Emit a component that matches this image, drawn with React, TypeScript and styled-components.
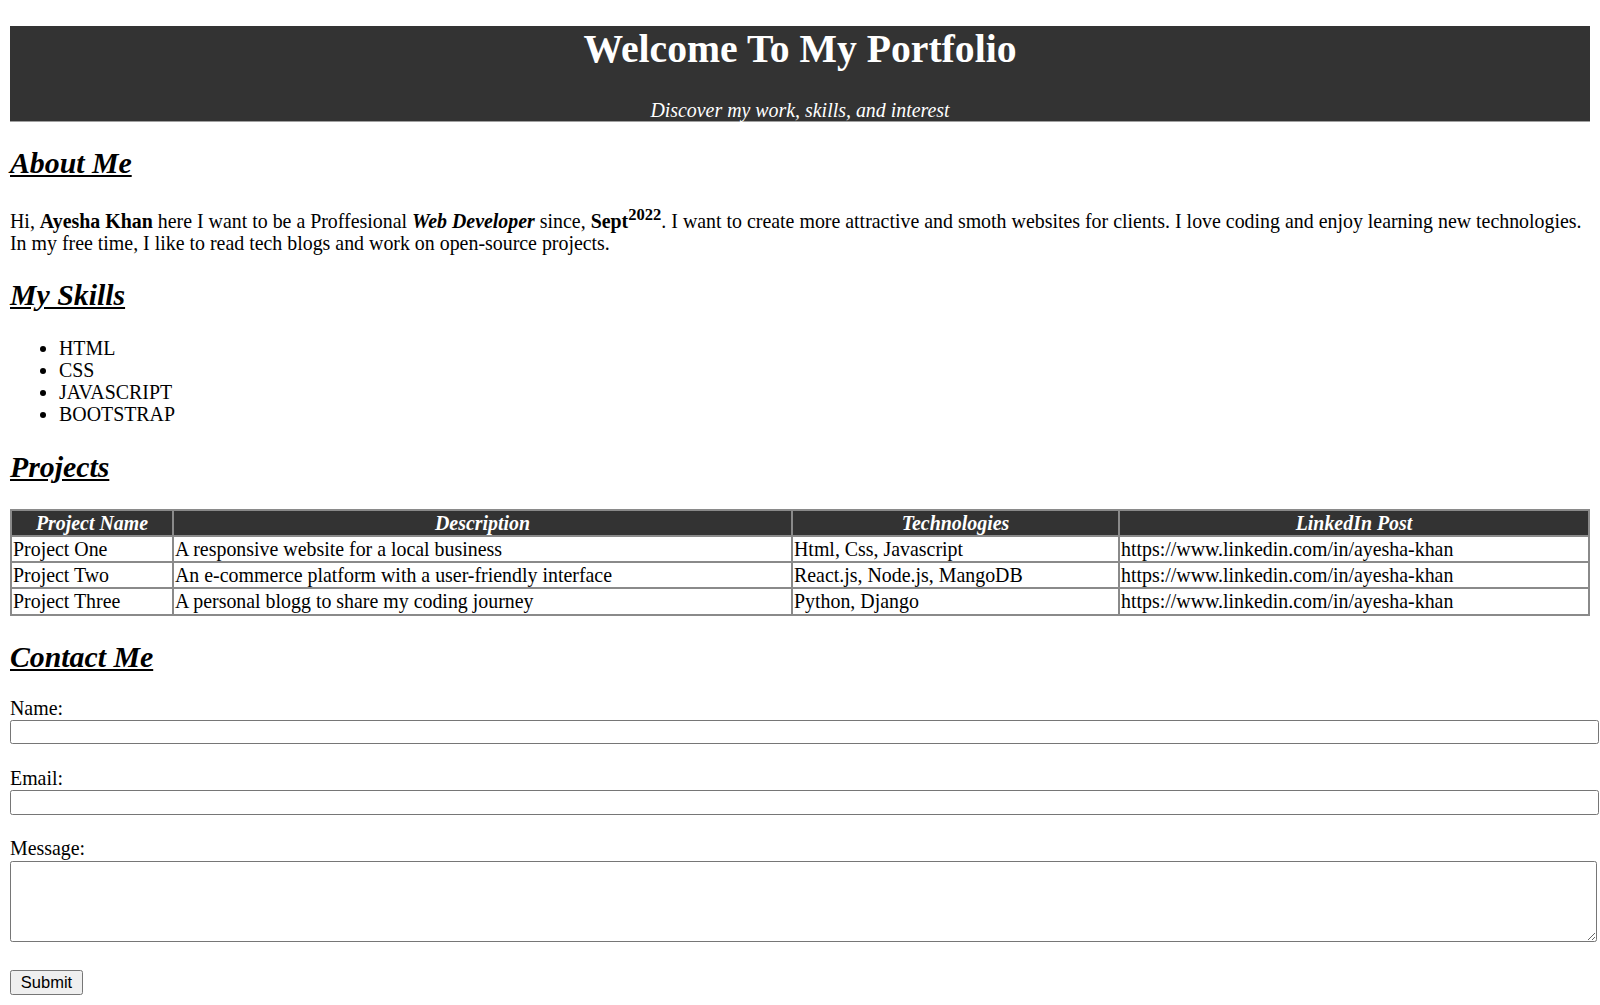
import React from 'react';
import styled, { createGlobalStyle } from 'styled-components';

const GlobalStyle = createGlobalStyle`
  html, body {
    margin: 0;
    padding: 0;
    background: #ffffff;
  }
  body {
    font-family: "Liberation Serif", "Times New Roman", serif;
    font-size: 19.9px;
    line-height: 22.1px;
    color: #000000;
  }
`

const Page = styled.div`
  padding: 0 10px 12px;
  overflow: hidden;
`

/* header band */
const Banner = styled.header`
  margin-top: 26px;
  background: #333333;
  color: #ffffff;
  text-align: center;
  border-bottom: 1px solid #a0a0a0;
`

const BannerTitle = styled.h1`
  margin: 0 0 28px;
  padding-top: 1px;
  font-size: 39.7px;
  line-height: 44px;
  font-weight: bold;
`

const BannerSub = styled.p`
  margin: 0;
  font-size: 19.9px;
  line-height: 22px;
  font-style: italic;
`

const Section = styled.section``

const Title = styled.h2`
  margin: 24px 0;
  font-size: 29.8px;
  line-height: 33px;
  font-weight: bold;
  font-style: italic;
  text-decoration: underline;
`

const Text = styled.p`
  margin: 25px 0 19.2px;
`

const SkillList = styled.ul`
  margin: 26px 0 25px;
  padding-left: 49px;
`

const Skill = styled.li`
  line-height: 22.1px;
`

/* projects table */
const Table = styled.table`
  width: 100%;
  margin-top: 26px;
  border-collapse: collapse;
  table-layout: fixed;
  font-size: 19.9px;
`

const HeadCell = styled.th<{ $w?: number }>`
  width: ${p => (p.$w ? `${p.$w}px` : 'auto')};
  background: #333333;
  color: #ffffff;
  font-style: italic;
  font-weight: bold;
  text-align: center;
  padding: 1px 2px;
  line-height: 22.1px;
  border: 2px solid #8a8a8a;
`

const Cell = styled.td`
  padding: 1px 1px;
  line-height: 22.1px;
  border: 2px solid #8a8a8a;
  text-align: left;
  white-space: nowrap;
  overflow: hidden;
`

/* contact form */
const Form = styled.form`
  margin: 0;
`

const Label = styled.label`
  display: block;
  line-height: 22.1px;
`

const Field = styled.input`
  display: block;
  width: 100%;
  height: 20.5px;
  margin: 1.2px 0 22.6px;
  padding: 1px 3.5px;
  border: 1px solid #767676;
  border-radius: 2.4px;
  font-family: "Liberation Sans", Arial, sans-serif;
  font-size: 16px;
  box-sizing: content-box;
  background: #ffffff;
`

const MessageBox = styled.textarea`
  display: block;
  width: 100%;
  height: 74px;
  margin: 1.2px 0 28.6px;
  padding: 2.5px;
  border: 1px solid #767676;
  border-radius: 2.4px;
  font-family: "Liberation Mono", monospace;
  font-size: 16px;
  box-sizing: content-box;
`

const SubmitButton = styled.button`
  display: block;
  height: 24.5px;
  padding: 0 9.8px;
  border: 1px solid #767676;
  border-radius: 2.4px;
  background: #efefef;
  color: #000000;
  font-family: "Liberation Sans", Arial, sans-serif;
  font-size: 16.5px;
  line-height: 18px;
`

const projects = [
  { name: 'Project One', desc: 'A responsive website for a local business', tech: 'Html, Css, Javascript' },
  { name: 'Project Two', desc: 'An e-commerce platform with a user-friendly interface', tech: 'React.js, Node.js, MangoDB' },
  { name: 'Project Three', desc: 'A personal blogg to share my coding journey', tech: 'Python, Django' },
]

const skills = ['HTML', 'CSS', 'JAVASCRIPT', 'BOOTSTRAP']

export default function App() {
  return (
    <>
      <GlobalStyle />
      <Page>
        <Banner>
          <BannerTitle>Welcome To My Portfolio</BannerTitle>
          <BannerSub>Discover my work, skills, and interest</BannerSub>
        </Banner>

        <Section>
          <Title>About Me</Title>
          <Text>
            Hi, <b>Ayesha Khan</b> here I want to be a Proffesional <b><i>Web Developer</i></b> since,{' '}
            <b>Sept<sup>2022</sup></b>. I want to create more attractive and smoth websites for clients. I love
            coding and enjoy learning new technologies. In my free time, I like to read tech blogs and work on
            open-source projects.
          </Text>
        </Section>

        <Section>
          <Title>My Skills</Title>
          <SkillList>
            {skills.map(s => (
              <Skill key={s}>{s}</Skill>
            ))}
          </SkillList>
        </Section>

        <Section>
          <Title>Projects</Title>
          <Table>
            <thead>
              <tr>
                <HeadCell $w={156}>Project Name</HeadCell>
                <HeadCell $w={613}>Description</HeadCell>
                <HeadCell $w={321}>Technologies</HeadCell>
                <HeadCell>LinkedIn Post</HeadCell>
              </tr>
            </thead>
            <tbody>
              {projects.map(p => (
                <tr key={p.name}>
                  <Cell>{p.name}</Cell>
                  <Cell>{p.desc}</Cell>
                  <Cell>{p.tech}</Cell>
                  <Cell>https://www.linkedin.com/in/ayesha-khan</Cell>
                </tr>
              ))}
            </tbody>
          </Table>
        </Section>

        <Section>
          <Title>Contact Me</Title>
          <Form onSubmit={e => e.preventDefault()}>
            <Label htmlFor="name">Name:</Label>
            <Field type="text" id="name" />
            <Label htmlFor="email">Email:</Label>
            <Field type="email" id="email" />
            <Label htmlFor="message">Message:</Label>
            <MessageBox id="message" />
            <SubmitButton type="submit">Submit</SubmitButton>
          </Form>
        </Section>
      </Page>
    </>
  )
}
